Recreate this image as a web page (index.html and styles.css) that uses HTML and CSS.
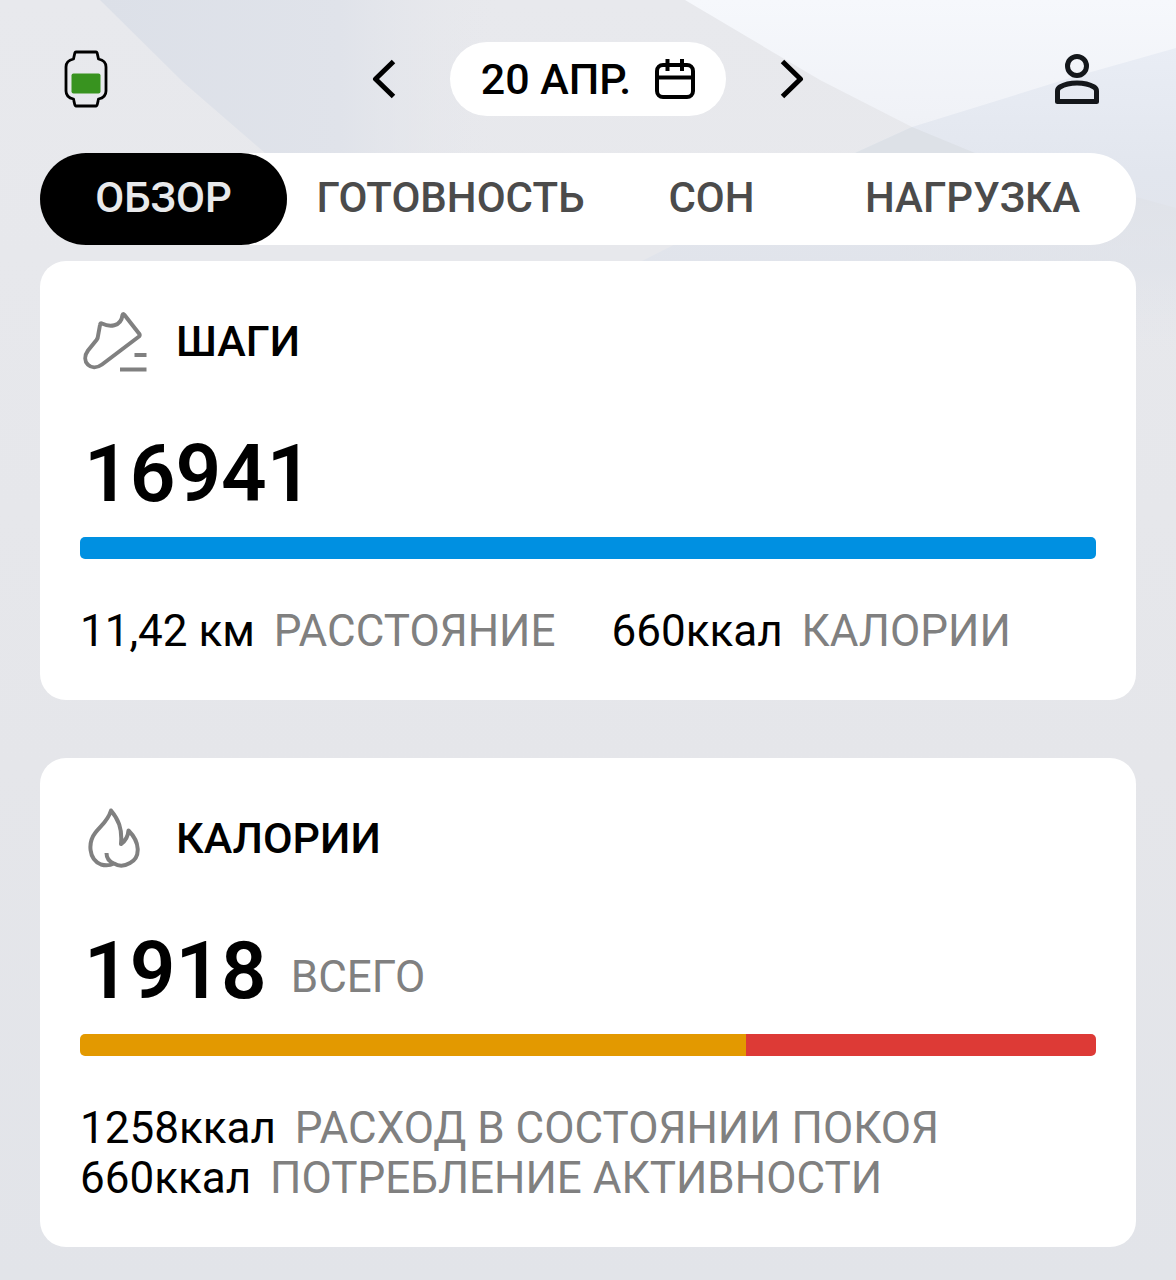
FILE: index.html
```html
<!DOCTYPE html>
<html lang="ru">
<head>
<meta charset="utf-8">
<meta name="viewport" content="width=device-width, initial-scale=1">
<title>Обзор</title>
<link rel="stylesheet" href="styles.css">
</head>
<body>
<svg class="backdrop" viewBox="0 0 1176 460" preserveAspectRatio="none" aria-hidden="true">
  <defs>
    <linearGradient id="left" x1="0" y1="0" x2="1" y2="0">
      <stop offset="0" stop-color="#dce0e8"/><stop offset="0.6" stop-color="#e0e3ea"/><stop offset="1" stop-color="#e7e8ec" stop-opacity="0"/>
    </linearGradient>
    <linearGradient id="light" x1="0" y1="0" x2="0" y2="1">
      <stop offset="0" stop-color="#f6f8fc"/><stop offset="0.5" stop-color="#f0f2f7"/><stop offset="1" stop-color="#e6e8ed"/>
    </linearGradient>
    <linearGradient id="right" x1="0" y1="0" x2="0" y2="1">
      <stop offset="0" stop-color="#e9edf5"/><stop offset="0.4" stop-color="#e2e6ee"/><stop offset="0.7" stop-color="#e1e4eb"/><stop offset="1" stop-color="#e6e7eb" stop-opacity="0"/>
    </linearGradient>
    <linearGradient id="shade" x1="0" y1="0" x2="0" y2="1">
      <stop offset="0" stop-color="#dee1e7"/><stop offset="1" stop-color="#e4e6eb" stop-opacity="0"/>
    </linearGradient>
  </defs>
  <path d="M100 0 183 82 265 153 300 180H500V0Z" fill="url(#left)"/>
  <path d="M685 0 820 80 912 127 985 158 1176 230V0Z" fill="url(#light)"/>
  <path d="M1176 48 1070 78 912 127 855 153 640 262V360H1176Z" fill="url(#right)"/>
  <path d="M912 127 855 153H975Z" fill="#dde1e7"/>
  <path d="M900 160 1140 198 1176 208V340H900Z" fill="url(#shade)"/>
</svg>
<div class="page">
  <header class="topbar">
    <button class="icon-button" type="button" aria-label="Часы">
      <svg width="44" height="58" viewBox="0 0 44 58" fill="none">
        <path d="M12 2H32Q33 2 33.400 4L34.500 9Q42 10.500 42 17V41Q42 47.500 34.500 49L33.400 54Q33 56 32 56H12Q11 56 10.600 54L9.500 49Q2 47.500 2 41V17Q2 10.500 9.500 9L10.600 4Q11 2 12 2Z" stroke="#000" stroke-width="2.800" stroke-linejoin="round"/>
        <rect x="7.500" y="23.500" width="29" height="20" rx="2" fill="#38931f"/>
      </svg>
    </button>
    <div class="date-switch">
      <button class="icon-button" type="button" aria-label="Предыдущий день">
        <svg width="24" height="40" viewBox="0 0 24 40" fill="none"><path d="M21.500 2.500 3.500 20 21.500 37.500" stroke="#000" stroke-width="5" stroke-linejoin="round"/></svg>
      </button>
      <button class="date" type="button">
        <span>20 АПР.</span>
        <svg width="40" height="40" viewBox="0 0 40 40" fill="none">
          <rect x="2" y="6" width="36" height="32" rx="6" stroke="#000" stroke-width="4"/>
          <path d="M2 18.500H38M12.500 0V12M27 0V12" stroke="#000" stroke-width="4"/>
        </svg>
      </button>
      <button class="icon-button" type="button" aria-label="Следующий день">
        <svg width="24" height="40" viewBox="0 0 24 40" fill="none"><path d="M2.500 2.500 20.500 20 2.500 37.500" stroke="#000" stroke-width="5" stroke-linejoin="round"/></svg>
      </button>
    </div>
    <button class="icon-button profile" type="button" aria-label="Профиль">
      <svg width="44" height="50" viewBox="0 0 44 50" fill="none" stroke="#14171b" stroke-width="5">
        <circle cx="22" cy="12" r="9.500"/>
        <path d="M2.500 47.500V37Q2.500 34.500 5 33C14 27.500 30 27.500 39 33Q41.500 34.500 41.500 37V47.500Z" stroke-linejoin="round"/>
      </svg>
    </button>
  </header>

  <nav class="tabs">
    <a class="tab tab-active" href="#overview" aria-current="page">ОБЗОР</a>
    <a class="tab" href="#readiness">ГОТОВНОСТЬ</a>
    <a class="tab" href="#sleep">СОН</a>
    <a class="tab" href="#load">НАГРУЗКА</a>
  </nav>

  <main class="cards" id="overview">
    <section class="card">
      <div class="card-head">
        <svg width="68" height="64" viewBox="0 0 68 64" fill="none" stroke="#808080" stroke-width="4" stroke-linejoin="round">
          <path d="M22 14.500C29 18 41 18.500 42.500 6Q43 4 44.500 6L59 24.500Q60.500 26 59 27.500L22 55.500C11 63.500 0 52.500 8 41.500L16.500 31Q18 29 18 27L20 16Q20.300 13.500 22 14.500Z"/>
          <path d="M54.500 46H66.500M40 60.500H66.500"/>
        </svg>
        <h2>ШАГИ</h2>
      </div>
      <p class="total"><strong>16941</strong></p>
      <div class="bar"><span class="part steps" style="width:100%"></span></div>
      <div class="stats">
        <p>11,42 км <span>РАССТОЯНИЕ</span></p>
        <p>660ккал <span>КАЛОРИИ</span></p>
      </div>
    </section>

    <section class="card">
      <div class="card-head">
        <svg width="68" height="64" viewBox="0 0 68 64" fill="none" stroke="#808080" stroke-width="4" stroke-linejoin="round">
          <path d="M34 57.500Q28 60.500 21 58.500C8 53 8 36 15.500 26.500C21 19.500 28 15 31 4.500C38 13 42.500 22 41 38C46 34.500 48 31 48.500 24.500C60 36 61 51 50 57C44 60.500 38 60 34 57.500C29 55.500 26.500 52 26.500 47"/>
        </svg>
        <h2>КАЛОРИИ</h2>
      </div>
      <p class="total"><strong>1918</strong><span>ВСЕГО</span></p>
      <div class="bar"><span class="part resting" style="width:65.600%"></span><span class="part active" style="width:34.400%"></span></div>
      <div class="stats stats-column">
        <p>1258ккал <span>РАСХОД В СОСТОЯНИИ ПОКОЯ</span></p>
        <p>660ккал <span>ПОТРЕБЛЕНИЕ АКТИВНОСТИ</span></p>
      </div>
    </section>
  </main>
</div>
</body>
</html>
```
FILE: styles.css
```css
* {
  box-sizing: border-box;
}

body {
  margin: 0;
  background: linear-gradient(#e8e9ed, #e5e6ea 60%, #e2e4e9);
  color: #000;
  font: 400 44px/50px Roboto, "Noto Sans", sans-serif;
}

h2,
p {
  margin: 0;
}

svg {
  display: block;
  flex: none;
}

button {
  border: 0;
  padding: 0;
  background: none;
  color: inherit;
  font: inherit;
  cursor: pointer;
}

.backdrop {
  position: absolute;
  inset: 0 0 auto;
  z-index: -1;
  width: 100%;
  height: 460px;
}

.page {
  padding: 42px 40px 33px;
}

.topbar {
  display: grid;
  grid-template-columns: 1fr auto 1fr;
  align-items: center;
  padding: 0 37px 0 24px;
  margin-bottom: 37px;
}

.topbar > .icon-button {
  justify-self: start;
}

.topbar > .profile {
  justify-self: end;
}

.date-switch {
  display: flex;
  align-items: center;
  gap: 54px;
  margin-left: 13px;
}

.date {
  display: flex;
  align-items: center;
  justify-content: center;
  gap: 24px;
  min-width: 276px;
  height: 74px;
  border-radius: 37px;
  background: #fff;
  font-size: 43px;
  font-weight: 500;
}

.tabs {
  display: flex;
  height: 92px;
  padding-right: 33px;
  margin-bottom: 16px;
  border-radius: 46px;
  background: #fff;
}

.tab {
  display: flex;
  flex: 261 1 0;
  justify-content: center;
  min-width: 0;
  color: #4b4b4b;
  font-size: 42px;
  font-weight: 500;
  line-height: 90px;
  text-decoration: none;
}

.tab-active {
  flex-grow: 247;
  margin-right: 33px;
  border-radius: 46px;
  background: #000;
  color: #e8e9eb;
}

.cards {
  display: flex;
  flex-direction: column;
  gap: 58px;
}

.card {
  padding: 40px 40px 44px;
  border-radius: 26px;
  background: #fff;
}

.card-head {
  display: flex;
  align-items: center;
  gap: 28px;
  height: 80px;
  margin-bottom: 48px;
}

.card-head h2 {
  font-size: 43px;
  font-weight: 500;
}

.total {
  display: flex;
  align-items: flex-end;
  gap: 24px;
  padding-left: 4px;
  margin-bottom: 18px;
}

.total strong {
  font-size: 80px;
  font-weight: 600;
  line-height: 90px;
}

.total span {
  line-height: 78px;
}

.total span,
.stats span {
  color: #808080;
}

.bar {
  display: flex;
  height: 22px;
  margin-bottom: 47px;
  border-radius: 5px;
  overflow: hidden;
}

.steps {
  background: #0090e1;
}

.resting {
  background: #e39900;
}

.active {
  background: #dd3a36;
}

.stats {
  display: flex;
  flex-wrap: wrap;
  column-gap: 56px;
}

.stats-column {
  flex-direction: column;
}

.stats span {
  margin-left: 8px;
}
```
